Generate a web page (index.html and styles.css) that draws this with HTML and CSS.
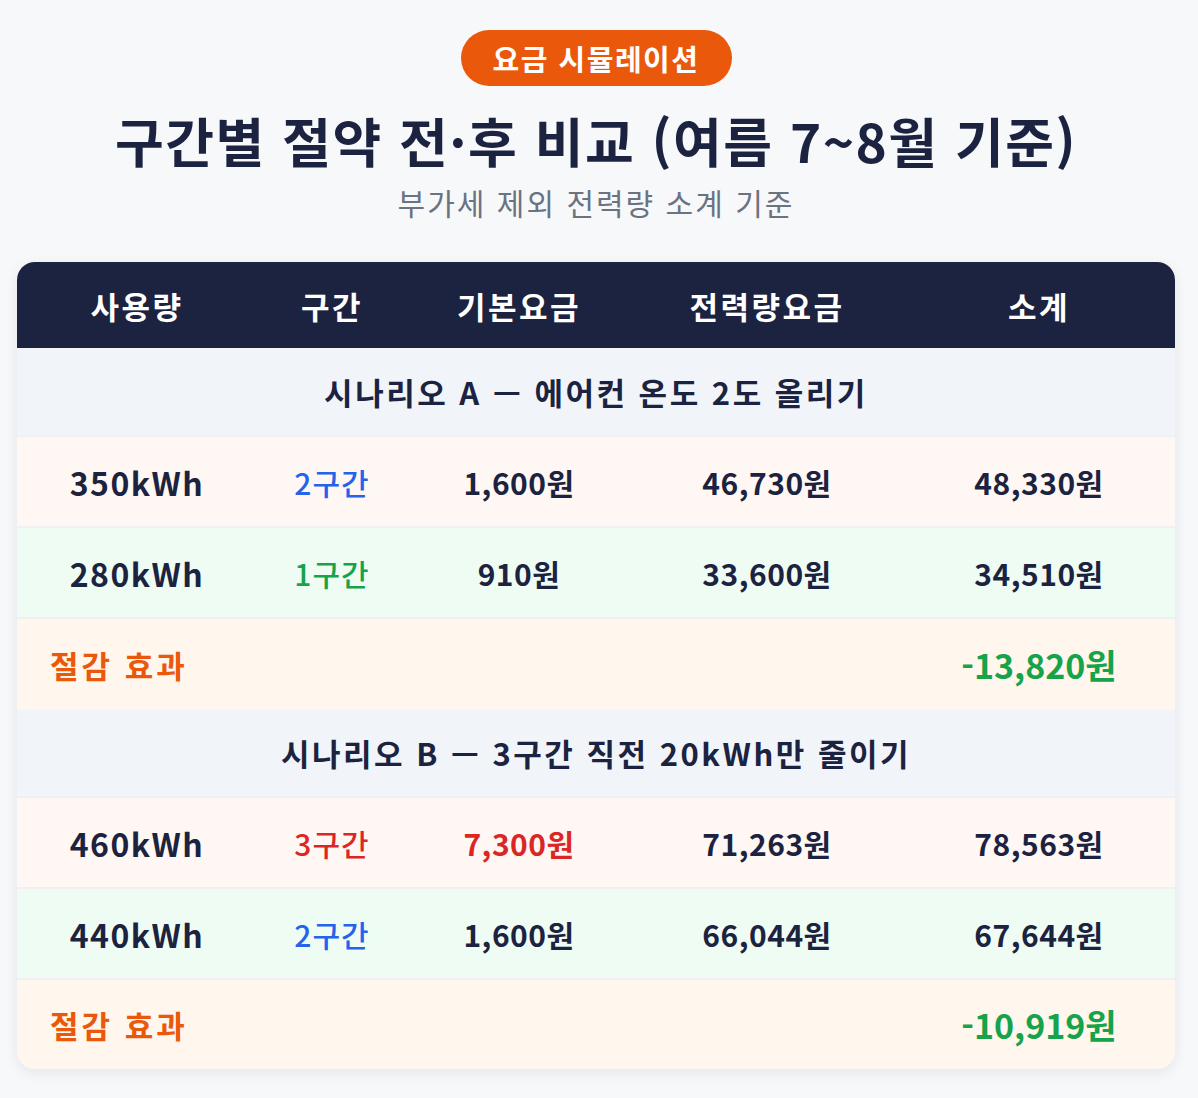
FILE: index.html
```html
<!DOCTYPE html>
<html lang="ko">
<head>
<meta charset="utf-8">
<title>요금 시뮬레이션</title>
<link rel="stylesheet" href="styles.css">
</head>
<body>
<main class="page">
  <header class="intro">
    <span class="badge">요금 시뮬레이션</span>
    <h1 class="title">구간별 절약 전·후 비교 (여름 7~8월 기준)</h1>
    <p class="subtitle">부가세 제외 전력량 소계 기준</p>
  </header>
  <div class="card">
    <table class="grid">
      <colgroup>
        <col class="c1"><col class="c2"><col class="c3"><col class="c4"><col class="c5">
      </colgroup>
      <thead>
        <tr><th>사용량</th><th>구간</th><th>기본요금</th><th>전력량요금</th><th>소계</th></tr>
      </thead>
      <tbody>
        <tr class="scenario"><td colspan="5">시나리오 A — 에어컨 온도 2도 올리기</td></tr>
        <tr class="before"><td class="usage">350kWh</td><td class="tier blue">2구간</td><td>1,600원</td><td>46,730원</td><td>48,330원</td></tr>
        <tr class="after"><td class="usage">280kWh</td><td class="tier green">1구간</td><td>910원</td><td>33,600원</td><td>34,510원</td></tr>
        <tr class="saving"><td class="label" colspan="4">절감 효과</td><td class="amount">-13,820원</td></tr>
        <tr class="scenario"><td colspan="5">시나리오 B — 3구간 직전 20kWh만 줄이기</td></tr>
        <tr class="before"><td class="usage">460kWh</td><td class="tier red">3구간</td><td class="red-bold">7,300원</td><td>71,263원</td><td>78,563원</td></tr>
        <tr class="after"><td class="usage">440kWh</td><td class="tier blue">2구간</td><td>1,600원</td><td>66,044원</td><td>67,644원</td></tr>
        <tr class="saving last"><td class="label" colspan="4">절감 효과</td><td class="amount">-10,919원</td></tr>
      </tbody>
    </table>
  </div>
</main>
</body>
</html>
```

FILE: styles.css
```css
* { box-sizing: border-box; }
html, body {
  margin: 0;
  padding: 0;
  background: #f7f8fa;
}
body {
  font-family: "Noto Sans CJK KR", "Noto Sans", sans-serif;
  color: #1c2340;
}
.page {
  padding: 30px 17px 28px 17px;
  width: 1192px;
}
.intro {
  display: flex;
  flex-direction: column;
  align-items: center;
}
.badge {
  display: inline-flex;
  align-items: center;
  justify-content: center;
  height: 56px;
  width: 271px;
  border-radius: 28px;
  background: #ea580c;
  color: #ffffff;
  font-size: 29px;
  font-weight: 700;
  letter-spacing: 1.5px;
}
.title {
  margin: 20px 0 0 0;
  font-size: 53px;
  line-height: 68px;
  font-weight: 700;
  color: #1c2340;
  letter-spacing: 1.5px;
}
.subtitle {
  margin: 8px 0 0 0;
  font-size: 30px;
  line-height: 40px;
  color: #6b7280;
  letter-spacing: 2px;
}
.card {
  margin-top: 40px;
  width: 1158px;
  border-radius: 18px;
  overflow: hidden;
  background: #ffffff;
  box-shadow: 0 4px 14px rgba(20, 30, 60, 0.08);
}
.grid {
  width: 100%;
  border-collapse: collapse;
  table-layout: fixed;
}
.c1 { width: 240px; }
.c2 { width: 150px; }
.c3 { width: 224px; }
.c4 { width: 272px; }
.c5 { width: 272px; }
.grid th {
  height: 86px;
  background: #1c2340;
  color: #ffffff;
  font-size: 31px;
  font-weight: 700;
  text-align: center;
  padding: 0;
  letter-spacing: 2.5px;
}
.grid td {
  height: 91px;
  padding: 0;
  text-align: center;
  font-size: 30px;
  font-weight: 700;
  color: #1c2340;
  letter-spacing: 0.5px;
  border-top: 2px solid #f0f0f2;
}
.grid td.usage {
  font-size: 32px;
  letter-spacing: 1.5px;
}
.scenario td {
  height: 88px;
  background: #f1f5f9;
  font-weight: 700;
  font-size: 31px !important;
  letter-spacing: 2.5px !important;
  border-top: none;
}
.before td { background: #fff7f3; }
.after td { background: #effcf4; }
.saving td { background: #fff6ed; }
.grid td.tier { font-weight: 500; letter-spacing: 1px; }
.blue { color: #2563eb !important; }
.green { color: #16a34a !important; }
.red { color: #dc2626 !important; }
.red-bold { color: #dc2626 !important; }
.saving .label {
  text-align: left;
  padding-left: 33px;
  color: #ea580c;
  font-size: 31px;
  font-weight: 600;
  letter-spacing: 3px;
}
.saving .amount {
  color: #16a34a;
  font-size: 34px;
  font-weight: 700;
  letter-spacing: 0;
}
.last td { height: 90px; }
```
